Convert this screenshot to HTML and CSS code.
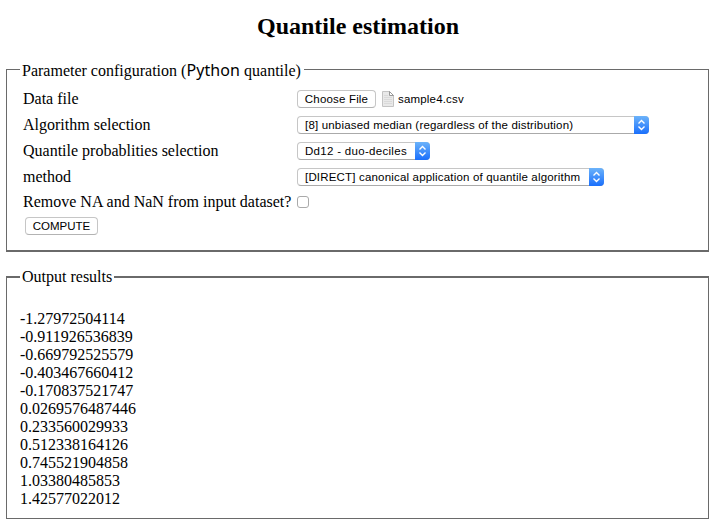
FILE: index.html
```html
<!DOCTYPE html>
<html lang="en">
<head>
<meta charset="utf-8">
<title>Quantile estimation</title>
<link rel="stylesheet" href="styles.css">
</head>
<body>
<h1>Quantile estimation</h1>
<fieldset class="config">
  <legend>Parameter configuration (<span class="lang">Python</span> quantile)</legend>
  <div class="row"><span class="label">Data file</span><button class="button choose" type="button">Choose File</button>
    <svg class="file" width="12" height="16" viewBox="0 0 12 16"><path d="M.5.5h7l4 4v11H.5z" fill="#e9e9e9" stroke="#c4c4c4"/><path d="M7.5.5v4h4z" fill="#fff" stroke="#999"/><path d="M2 4.5h4M2 6.5h8M2 8.5h8M2 10.5h8M2 12.5h8" stroke="#dadada"/></svg>
    <span class="filename">sample4.csv</span></div>
  <div class="row"><span class="label">Algorithm selection</span><div class="select s1"><span>[8] unbiased median (regardless of the distribution)</span><i><svg width="15" height="18" viewBox="0 0 15 18"><path d="M4.5 7.5l3-3 3 3M4.5 10.5l3 3 3-3"/></svg></i></div></div>
  <div class="row"><span class="label">Quantile probablities selection</span><div class="select s2"><span>Dd12 - duo-deciles</span><i><svg width="15" height="18" viewBox="0 0 15 18"><path d="M4.5 7.5l3-3 3 3M4.5 10.5l3 3 3-3"/></svg></i></div></div>
  <div class="row"><span class="label">method</span><div class="select s3"><span>[DIRECT] canonical application of quantile algorithm</span><i><svg width="15" height="18" viewBox="0 0 15 18"><path d="M4.5 7.5l3-3 3 3M4.5 10.5l3 3 3-3"/></svg></i></div></div>
  <div class="row last"><span class="label">Remove NA and NaN from input dataset?</span><input class="check" type="checkbox"></div>
  <button class="button compute" type="button">COMPUTE</button>
</fieldset>
<fieldset class="output">
  <legend>Output results</legend>
  <div class="results">
    <div>-1.27972504114</div>
    <div>-0.911926536839</div>
    <div>-0.669792525579</div>
    <div>-0.403467660412</div>
    <div>-0.170837521747</div>
    <div>0.0269576487446</div>
    <div>0.233560029933</div>
    <div>0.512338164126</div>
    <div>0.745521904858</div>
    <div>1.03380485853</div>
    <div>1.42577022012</div>
  </div>
</fieldset>
</body>
</html>
```
FILE: styles.css
```css
* { box-sizing: border-box; }
body {
  margin: 0;
  height: 526px;
  overflow: hidden;
  background: #fff;
  color: #000;
  font: 16px/18px "Liberation Serif", "Times New Roman", serif;
}
h1 {
  margin: 0;
  padding-top: 12px;
  height: 62px;
  font-size: 24px;
  line-height: 28px;
  text-align: center;
}
fieldset {
  display: block;
  margin: 0 7px 0 6px;
  min-width: 0;
  border: 1px solid #6a6a6a;
}
legend { padding: 0 2px; white-space: nowrap; }
.config { height: 190px; padding: 9px 13px 0 13px; border-bottom-width: 2px; }
.config legend { height: 15px; width: 284px; }
.lang { font-family: "Noto Sans", "Open Sans", sans-serif; font-size: 16px; line-height: 15px; letter-spacing: .1px; }
.row { display: flex; align-items: center; height: 26px; padding-left: 3px; }
.row.last { height: 24px; }
.label { width: 274px; white-space: nowrap; }
.button, .select, .filename {
  font-family: "Liberation Sans", Arial, sans-serif;
  font-size: 11.5px;
  line-height: 16px;
  letter-spacing: .18px;
  white-space: nowrap;
  color: #000;
}
.button {
  display: block;
  height: 18px;
  margin: 0;
  padding: 0;
  border: 1px solid #c6c6c6;
  border-bottom-color: #b3b3b3;
  border-radius: 4px;
  background: #fff;
  text-align: center;
}
.choose { width: 79px; }
.compute { width: 73px; margin: 3px 0 0 5px; letter-spacing: 0; }
.file { margin: 0 4px 0 6px; }
.select {
  display: flex;
  justify-content: space-between;
  height: 18px;
  padding-left: 7px;
  border: 1px solid #c6c6c6;
  border-bottom-color: #aaa;
  border-radius: 4px;
}
.select i {
  width: 15px;
  height: 18px;
  margin: -1px -1px 0 0;
  border-radius: 0 4px 4px 0;
  background: linear-gradient(#6cb3fa, #1a6ffc);
}
.select svg { display: block; fill: none; stroke: #fff; stroke-width: 1.4; }
.s1 { width: 352px; }
.s2 { width: 133px; letter-spacing: .3px; }
.s3 { width: 307px; }
.check {
  appearance: none;
  width: 12px;
  height: 12px;
  margin: 0;
  border: 1px solid #aaa;
  border-radius: 3px;
  background: #fff;
}
.output { margin-top: 16px; height: 251px; padding: 0 13px; border-top-width: 2px; }
.results { padding-top: 24px; }
```
